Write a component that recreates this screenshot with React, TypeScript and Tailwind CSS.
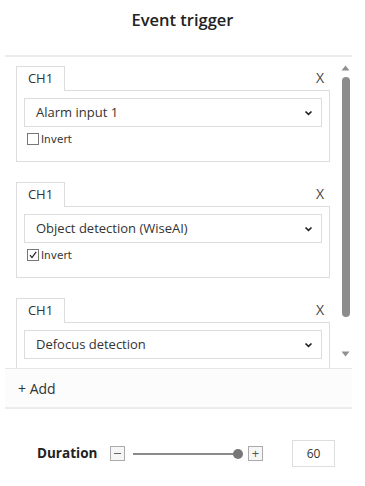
import React from "react";

type Trigger = { label: string; invert: boolean | null };

const triggers: Trigger[] = [
  { label: "Alarm input 1", invert: false },
  { label: "Object detection (WiseAI)", invert: true },
  { label: "Defocus detection", invert: null },
];

function Chevron() {
  return (
    <svg width="9" height="6" viewBox="0 0 9 6" className="text-[#222]">
      <path d="M1.5 1.5 L4.5 4.3 L7.5 1.5" fill="none" stroke="currentColor" strokeWidth="1.7" />
    </svg>
  );
}

function TriggerCard({ t }: { t: Trigger }) {
  return (
    <div className="w-[314px] shrink-0">
      <div className="flex h-[24px] items-end justify-between">
        <div className="relative -mb-px flex h-[25px] w-[49px] items-center justify-center border border-b-0 border-[#dcdcdc] bg-white text-[13px] text-[#333]">
          CH1
        </div>
        <span className="mb-[5px] mr-[6px] text-[14px] leading-none text-[#444]">X</span>
      </div>
      <div className="border border-[#dcdcdc] px-[7px] pb-[16px] pt-[7px]">
        <div className="flex h-[29px] items-center justify-between border border-[#dcdcdc] bg-white pl-[11px] pr-[8px] text-[13px] text-[#333]">
          <span>{t.label}</span>
          <Chevron />
        </div>
        {t.invert !== null && (
          <div className="mt-[6px] flex h-[12px] items-center gap-[2px] pl-[3px]">
            <div className="flex h-[12px] w-[12px] items-center justify-center border border-[#777] bg-white">
              {t.invert && (
                <svg width="10" height="10" viewBox="0 0 10 10">
                  <path d="M2 5.2 L4 7.6 L8.2 1.8" fill="none" stroke="#222" strokeWidth="1.2" />
                </svg>
              )}
            </div>
            <span className="text-[10.5px] leading-none text-[#333]" style={{ fontFamily: '"DejaVu Sans", sans-serif' }}>
              Invert
            </span>
          </div>
        )}
      </div>
    </div>
  );
}

export default function App() {
  return (
    <div className="h-[486px] w-[365px] bg-white" style={{ fontFamily: '"Open Sans", "Noto Sans", sans-serif' }}>
      <div className="flex h-[55px] items-start justify-center pt-[8px]">
        <h1 className="text-[16.5px] font-semibold text-[#222]">Event trigger</h1>
      </div>

      <div className="ml-[5px] w-[347px] border-t-2 border-[#ececec]">
        <div className="flex h-[312px] overflow-hidden border-b border-[#e6e6e6]">
          <div className="flex flex-1 flex-col gap-[20px] pl-[11px] pt-[9px]">
            {triggers.map((t, i) => (
              <TriggerCard key={i} t={t} />
            ))}
          </div>
          <div className="flex w-[13px] flex-col items-center pt-[8px]">
            <svg width="9" height="6" viewBox="0 0 9 6">
              <path d="M0.5 5.5 L4.5 0.5 L8.5 5.5 Z" fill="#909090" />
            </svg>
            <div className="mt-[6px] h-[240px] w-[8px] rounded-full bg-[#8c8c8c]" />
            <svg width="9" height="6" viewBox="0 0 9 6" className="mt-[34px]">
              <path d="M0.5 0.5 L4.5 5.5 L8.5 0.5 Z" fill="#909090" />
            </svg>
          </div>
        </div>
        <div className="flex h-[40px] items-center border-b-2 border-[#ececec] bg-[#fcfcfc] pl-[13px] text-[14px] text-[#333]">
          + Add
        </div>
      </div>

      <div className="mt-[31px] flex h-[27px] items-center pl-[37px]">
        <span className="w-[73px] text-[13.5px] font-bold text-[#222]">Duration</span>
        <div className="flex h-[15px] w-[15px] items-center justify-center border border-[#aaa] bg-[#f6f6f6]">
          <div className="h-px w-[7px] bg-[#666]" />
        </div>
        <div className="ml-[8px] flex w-[110px] items-center">
          <div className="h-[2px] flex-1 bg-[#8a8a8a]" />
          <div className="-ml-[5px] h-[10px] w-[10px] rounded-full bg-[#777]" />
        </div>
        <div className="ml-[5px] flex h-[15px] w-[15px] items-center justify-center border border-[#aaa] bg-[#f6f6f6]">
          <span className="text-[13px] leading-none text-[#555]">+</span>
        </div>
        <div className="ml-[29px] flex h-[27px] w-[43px] items-center justify-center border border-[#ddd] text-[12px] text-[#333]">
          60
        </div>
      </div>
    </div>
  );
}
